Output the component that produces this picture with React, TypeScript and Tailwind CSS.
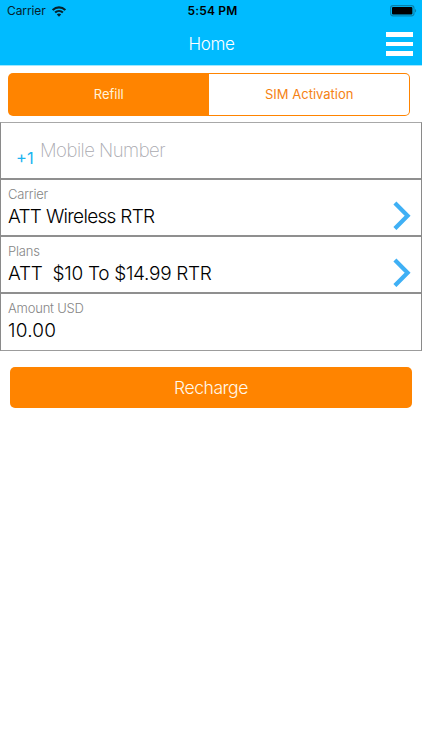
import { useState } from "react";
import clsx from "clsx";

interface Field {
  label: string;
  value: string;
  valueClass: string;
  hasPicker: boolean;
}

const FIELDS: Field[] = [
  { label: "Carrier", value: "ATT Wireless RTR", valueClass: "tracking-[-0.7px]", hasPicker: true },
  { label: "Plans", value: "ATT  $10 To $14.99 RTR", valueClass: "tracking-[-0.3px]", hasPicker: true },
  { label: "Amount USD", value: "10.00", valueClass: "tracking-[0.2px]", hasPicker: false },
];

const TABS = ["Refill", "SIM Activation"];

function WifiIcon() {
  return (
    <svg className="h-[11px] w-[14px]" viewBox="0 0 14 11" fill="none" stroke="#06212b" strokeWidth="2.1">
      <path d="M0.7 4.1C4.3 0.5 9.7 0.5 13.3 4.1" />
      <path d="M3.1 6.6C5.3 4.5 8.7 4.5 10.9 6.6" />
      <path d="M7 10.7L4.8 8.4C6.1 7.3 7.9 7.3 9.2 8.4Z" fill="#06212b" stroke="none" />
    </svg>
  );
}

function BatteryIcon() {
  return (
    <svg className="h-[12px] w-[27px]" viewBox="0 0 27 12">
      <rect x="0.6" y="0.6" width="23.4" height="10.3" rx="2.6" fill="none" stroke="#0782ac" strokeWidth="1.1" />
      <rect x="2" y="2" width="20.4" height="7.5" rx="1" fill="#000" />
      <path d="M25 4v3.6c1.6-.6 1.6-3 0-3.6Z" fill="#0782ac" />
    </svg>
  );
}

function ChevronIcon() {
  return (
    <svg className="h-[29px] w-[19px]" viewBox="0 0 19 29" fill="none" stroke="#3fb0f5" strokeWidth="4.2">
      <path d="M1.9 2L14.6 14.8L1.9 27.6" />
    </svg>
  );
}

function StatusBar() {
  return (
    <div className="grid h-[22px] grid-cols-3 items-center pl-[7px] pr-[5px] text-[12px] text-[#06212b]">
      <div className="flex items-center gap-[6px]">
        <span className="tracking-[-0.1px]">Carrier</span>
        <WifiIcon />
      </div>
      <span className="pl-[1px] text-center font-semibold tracking-[0.2px] text-black">5:54 PM</span>
      <div className="flex justify-end">
        <BatteryIcon />
      </div>
    </div>
  );
}

export default function App() {
  const [activeTab, setActiveTab] = useState("Refill");

  return (
    <div className="h-[750px] w-[422px] overflow-hidden bg-white font-['Inter','Liberation_Sans',sans-serif]">
      <header className="h-[66px] border-b border-[#9fe8ff] bg-[#00bbff]">
        <StatusBar />
        <div className="grid h-[43px] grid-cols-3 items-center pr-[9px]">
          <h1 className="col-start-2 pl-[10px] text-center text-[17px] font-light leading-5 tracking-[-0.3px] text-white">
            Home
          </h1>
          <button type="button" aria-label="Menu" className="flex flex-col gap-[5px] justify-self-end">
            <span className="h-[5px] w-[27px] bg-white" />
            <span className="h-[4px] w-[27px] bg-white" />
            <span className="h-[5px] w-[27px] bg-white" />
          </button>
        </div>
      </header>

      <div className="ml-[8px] mt-[7px] h-[43px] w-[402px] rounded-[5px] bg-[#ff8400] p-px">
        <div className="flex h-full overflow-hidden rounded-[4px]">
          {TABS.map((tab) => (
            <button
              key={tab}
              type="button"
              onClick={() => setActiveTab(tab)}
              className={clsx(
                "flex-1 text-[13px]",
                activeTab === tab ? "bg-[#ff8400] text-[#fff3d9]" : "bg-white pl-[1px] text-[#f58213]",
              )}
            >
              {tab}
            </button>
          ))}
        </div>
      </div>

      <main className="mt-[6px] border border-t-[#a8a8a8] border-r-[#8a8a8a] border-b-[#9c9c9c] border-l-[#8a8a8a]">
        <div className="flex h-[57px] border-b-2 border-[#8f8f8f] pl-[15px]">
          <span className="mt-[23px] w-[24px] text-[16.5px] leading-6 text-[#1cb4f0]">+1</span>
          <span className="mt-[15px] text-[18.5px] font-extralight leading-6 tracking-[-0.5px] text-[#a9a9af]">
            Mobile Number
          </span>
        </div>
        {FIELDS.map((field, i) => (
          <div
            key={field.label}
            className={clsx(
              "flex justify-between pl-[7px] pr-[9px] pt-[5px]",
              i < FIELDS.length - 1 ? "h-[57px] border-b-2 border-[#8f8f8f]" : "h-[56px]",
            )}
          >
            <div>
              <p className="mt-[1px] text-[13px] font-light leading-4 tracking-[-0.2px] text-[#858585]">{field.label}</p>
              <p className={clsx("mt-[3px] whitespace-pre text-[19px] font-light leading-6 text-black", field.valueClass)}>
                {field.value}
              </p>
            </div>
            {field.hasPicker && (
              <span className="mt-[16px]">
                <ChevronIcon />
              </span>
            )}
          </div>
        ))}
      </main>

      <button
        type="button"
        className="ml-[10px] mt-[16px] block h-[41px] w-[402px] rounded-[5px] bg-[#ff8400] pt-px text-[17.5px] font-light tracking-[-0.45px] text-[#fff8ea]"
      >
        Recharge
      </button>
    </div>
  );
}
